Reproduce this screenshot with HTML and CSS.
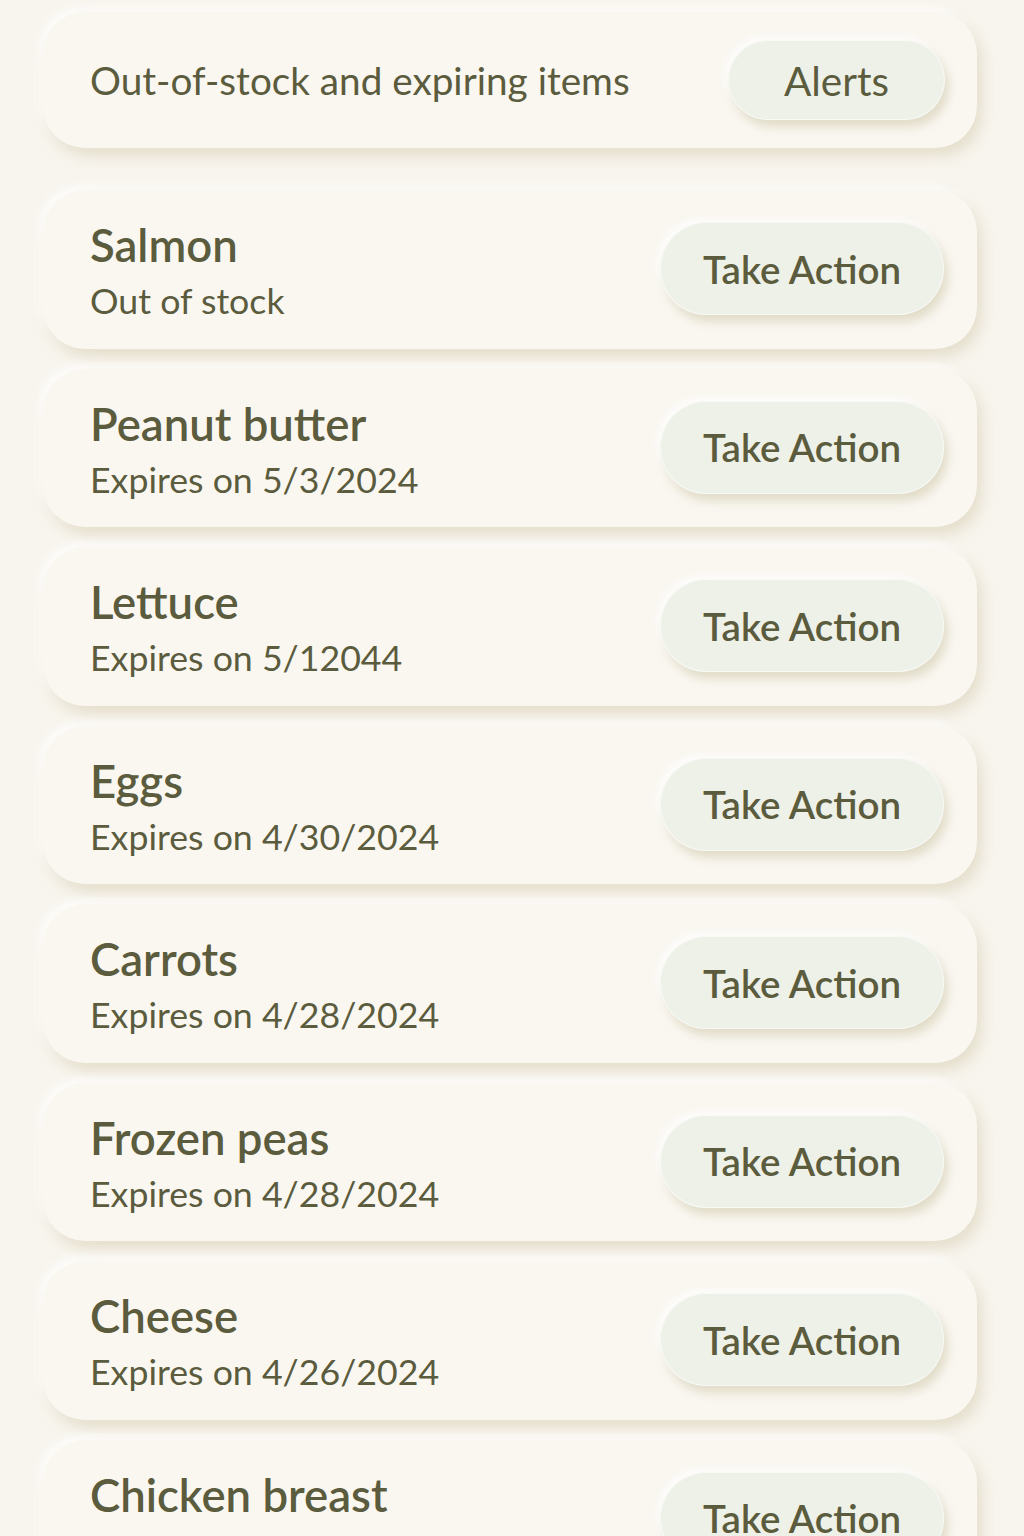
FILE: index.html
```html
<!DOCTYPE html>
<html lang="en">
<head>
    <meta charset="UTF-8">
    <title>Alerts</title>
    <link rel="stylesheet" href="styles.css">
</head>
<body>
    <div class="page">
        <div class="header card">
            <span class="header-title">Out-of-stock and expiring items</span>
            <span class="btn btn-alerts">Alerts</span>
        </div>

        <ul class="list">
            <li class="card item">
                <div class="info">
                    <div class="name">Salmon</div>
                    <div class="status">Out of stock</div>
                </div>
                <span class="btn">Take Action</span>
            </li>
            <li class="card item">
                <div class="info">
                    <div class="name">Peanut butter</div>
                    <div class="status">Expires on 5/3/2024</div>
                </div>
                <span class="btn">Take Action</span>
            </li>
            <li class="card item">
                <div class="info">
                    <div class="name">Lettuce</div>
                    <div class="status">Expires on 5/12044</div>
                </div>
                <span class="btn">Take Action</span>
            </li>
            <li class="card item">
                <div class="info">
                    <div class="name">Eggs</div>
                    <div class="status">Expires on 4/30/2024</div>
                </div>
                <span class="btn">Take Action</span>
            </li>
            <li class="card item">
                <div class="info">
                    <div class="name">Carrots</div>
                    <div class="status">Expires on 4/28/2024</div>
                </div>
                <span class="btn">Take Action</span>
            </li>
            <li class="card item">
                <div class="info">
                    <div class="name">Frozen peas</div>
                    <div class="status">Expires on 4/28/2024</div>
                </div>
                <span class="btn">Take Action</span>
            </li>
            <li class="card item">
                <div class="info">
                    <div class="name">Cheese</div>
                    <div class="status">Expires on 4/26/2024</div>
                </div>
                <span class="btn">Take Action</span>
            </li>
            <li class="card item">
                <div class="info">
                    <div class="name">Chicken breast</div>
                </div>
                <span class="btn">Take Action</span>
            </li>
        </ul>
    </div>
</body>
</html>
```

FILE: styles.css
```css
* {
    margin: 0;
    padding: 0;
    box-sizing: border-box;
}
html, body {
    height: 100%;
    overflow: hidden;
}
body {
    background-color: #f8f5ee;
    font-family: Lato, "Noto Sans", sans-serif;
    color: #5b5b3d;
}
.page {
    padding: 12px 47px 0 43px;
}
.card {
    background-color: #faf7f1;
    border-radius: 42px;
    box-shadow: 5px 8px 14px rgba(214, 204, 176, 0.55),
                -4px -4px 10px rgba(255, 255, 255, 0.9);
}
.header {
    display: flex;
    align-items: center;
    justify-content: space-between;
    height: 136px;
    padding: 0 32px 0 47px;
}
.header-title {
    font-size: 38.7px;
    font-weight: 400;
}
.list {
    list-style: none;
    display: flex;
    flex-direction: column;
    gap: 20px;
    margin-top: 42px;
}
.item {
    display: flex;
    align-items: flex-start;
    justify-content: space-between;
    height: 158.5px;
    padding: 29px 33px 0 47px;
}
.info {
    display: flex;
    flex-direction: column;
    gap: 8px;
}
.name {
    font-size: 45.5px;
    font-weight: 600;
    line-height: 52px;
}
.status {
    font-size: 35.7px;
    line-height: 44px;
}
.btn {
    display: flex;
    align-items: center;
    justify-content: center;
    width: 284px;
    height: 93px;
    border-radius: 47px;
    background-color: #eef1e8;
    font-size: 38.5px;
    font-weight: 600;
    box-shadow: 4px 7px 10px rgba(206, 198, 168, 0.55),
                -3px -3px 7px rgba(255, 255, 255, 0.9),
                inset 0 0 0 1px rgba(255, 255, 255, 0.6);
}
.item .btn {
    margin-top: 3px;
}
.btn-alerts {
    width: 217px;
    height: 80px;
    border-radius: 40px;
    font-weight: 400;
    font-size: 40.5px;
}
```
